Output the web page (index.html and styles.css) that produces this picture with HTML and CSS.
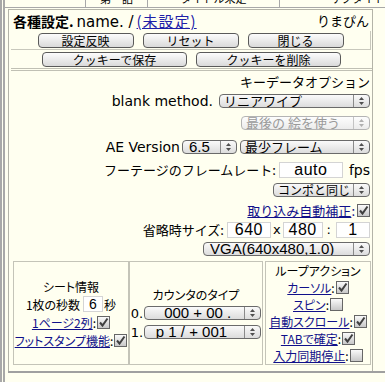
FILE: index.html
```html
<!DOCTYPE html>
<html lang="ja">
<head>
    <meta charset="UTF-8">
    <meta name="viewport" content="width=device-width, initial-scale=1.0">
    <title>各種設定</title>
    <link rel="stylesheet" href="styles.css">
</head>
<body>
<div class="page">
    <div class="tabs">
        <div class="tabs__cell tabs__cell--blank"></div>
        <div class="tabs__cell tabs__cell--no">第一話</div>
        <div class="tabs__cell tabs__cell--title">タイトル未定</div>
        <div class="tabs__cell tabs__cell--sub">サブタイトル</div>
    </div>

    <div class="main">
        <div class="panel">
            <div class="panel__title">
                <span><b class="title__head">各種設定.</b> <span class="title__name">name. /</span> <a href="#" class="link link--title">(未設定)</a></span>
                <span class="title__user">りまぴん</span>
            </div>

            <div class="btn-row btn-row--first">
                <button class="btn btn--small">設定反映</button>
                <button class="btn btn--small">リセット</button>
                <button class="btn btn--small">閉じる</button>
            </div>
            <div class="btn-row btn-row--second">
                <button class="btn btn--wide">クッキーで保存</button>
                <button class="btn btn--wide">クッキーを削除</button>
            </div>

            <div class="options">
                <div class="opt opt--20">キーデータオプション</div>
                <div class="opt opt--20">
                    <span class="latin">blank method.</span>
                    <span class="select select--method">
                        <span class="select__text">リニアワイプ</span>
                        <span class="select__arrow"><svg width="7" height="10" viewBox="0 0 7 10"><path d="M3.5 1L6 4H1Z M1 6H6L3.5 9Z" fill="#505050"/></svg></span>
                    </span>
                </div>
                <div class="opt opt--24">
                    <span class="select select--last select--disabled">
                        <span class="select__text">最後の 絵を使う</span>
                        <span class="select__arrow"><svg width="7" height="10" viewBox="0 0 7 10"><path d="M3.5 1L6 4H1Z M1 6H6L3.5 9Z" fill="#b0b0b0"/></svg></span>
                    </span>
                </div>
                <div class="opt opt--24">
                    <span class="latin">AE Version</span>
                    <span class="select select--ver">
                        <span class="select__text select__text--latin">6.5</span>
                        <span class="select__arrow"><svg width="7" height="10" viewBox="0 0 7 10"><path d="M3.5 1L6 4H1Z M1 6H6L3.5 9Z" fill="#505050"/></svg></span>
                    </span>
                    <span class="select select--frame">
                        <span class="select__text">最少フレーム</span>
                        <span class="select__arrow"><svg width="7" height="10" viewBox="0 0 7 10"><path d="M3.5 1L6 4H1Z M1 6H6L3.5 9Z" fill="#505050"/></svg></span>
                    </span>
                </div>
                <div class="opt opt--21">
                    フーテージのフレームレート:<input class="input input--fps" type="text" value="auto"><span class="latin unit">fps</span>
                </div>
                <div class="opt opt--20">
                    <span class="select select--comp">
                        <span class="select__text select__text--small">コンポと同じ</span>
                        <span class="select__arrow"><svg width="7" height="10" viewBox="0 0 7 10"><path d="M3.5 1L6 4H1Z M1 6H6L3.5 9Z" fill="#505050"/></svg></span>
                    </span>
                </div>
                <div class="opt opt--20">
                    <a href="#" class="link">取り込み自動補正</a><span class="colon">:</span>
                    <span class="check"><svg width="11" height="11" viewBox="0 0 11 11"><path d="M2 5.5L4.5 8.5L9.5 1.5" fill="none" stroke="#404040" stroke-width="2"/></svg></span>
                </div>
                <div class="opt opt--19">
                    省略時サイズ:<input class="input input--w" type="text" value="640"><span class="latin sep">x</span><input class="input input--h" type="text" value="480"><span class="latin sep sep--colon">:</span><input class="input input--ratio" type="text" value="1">
                </div>
                <div class="opt opt--19">
                    <span class="select select--size">
                        <span class="select__text select__text--latin">VGA(640x480,1.0)</span>
                        <span class="select__arrow"><svg width="7" height="10" viewBox="0 0 7 10"><path d="M3.5 1L6 4H1Z M1 6H6L3.5 9Z" fill="#505050"/></svg></span>
                    </span>
                </div>
            </div>

            <div class="bottom">
                <div class="cell cell--sheet">
                    <div class="line">シート情報</div>
                    <div class="line">1枚の秒数<input class="input input--sec" type="text" value="6">秒</div>
                    <div class="line">
                        <a href="#" class="link">1ページ2列</a>:<span class="check"><svg width="11" height="11" viewBox="0 0 11 11"><path d="M2 5.5L4.5 8.5L9.5 1.5" fill="none" stroke="#404040" stroke-width="2"/></svg></span>
                    </div>
                    <div class="line">
                        <a href="#" class="link">フットスタンプ機能</a>:<span class="check"><svg width="11" height="11" viewBox="0 0 11 11"><path d="M2 5.5L4.5 8.5L9.5 1.5" fill="none" stroke="#404040" stroke-width="2"/></svg></span>
                    </div>
                </div>

                <div class="cell cell--counter">
                    <div class="line">カウンタのタイプ</div>
                    <div class="line line--select">
                        <span class="latin num">0.</span>
                        <span class="select select--counter">
                            <span class="select__text select__text--latin">000 + 00 .</span>
                            <span class="select__arrow"><svg width="7" height="10" viewBox="0 0 7 10"><path d="M3.5 1L6 4H1Z M1 6H6L3.5 9Z" fill="#505050"/></svg></span>
                        </span>
                    </div>
                    <div class="line line--select">
                        <span class="latin num">1.</span>
                        <span class="select select--counter">
                            <span class="select__text select__text--latin">p 1 / + 001 _</span>
                            <span class="select__arrow"><svg width="7" height="10" viewBox="0 0 7 10"><path d="M3.5 1L6 4H1Z M1 6H6L3.5 9Z" fill="#505050"/></svg></span>
                        </span>
                    </div>
                </div>

                <div class="cell cell--loop">
                    <div class="line">ループアクション</div>
                    <div class="line">
                        <a href="#" class="link">カーソル</a>:<span class="check"><svg width="11" height="11" viewBox="0 0 11 11"><path d="M2 5.5L4.5 8.5L9.5 1.5" fill="none" stroke="#404040" stroke-width="2"/></svg></span>
                    </div>
                    <div class="line">
                        <a href="#" class="link">スピン</a>:<span class="check"></span>
                    </div>
                    <div class="line">
                        <a href="#" class="link">自動スクロール</a>:<span class="check"><svg width="11" height="11" viewBox="0 0 11 11"><path d="M2 5.5L4.5 8.5L9.5 1.5" fill="none" stroke="#404040" stroke-width="2"/></svg></span>
                    </div>
                    <div class="line">
                        <a href="#" class="link">TABで確定</a>:<span class="check"><svg width="11" height="11" viewBox="0 0 11 11"><path d="M2 5.5L4.5 8.5L9.5 1.5" fill="none" stroke="#404040" stroke-width="2"/></svg></span>
                    </div>
                    <div class="line">
                        <a href="#" class="link">入力同期停止</a>:<span class="check"></span>
                    </div>
                </div>
            </div>
        </div>
    </div>
</div>
</body>
</html>
```

FILE: styles.css
```css
* {
    box-sizing: border-box;
}

body {
    margin: 0;
    background-color: #fffff0;
    color: #000;
    font-family: "Noto Sans CJK JP", sans-serif;
    font-size: 13px;
    overflow: hidden;
}

.page {
    height: 382px;
    border-left: 5px double #a8a8a8;
}

.latin {
    font-family: "DejaVu Sans", "Noto Sans CJK JP", sans-serif;
    font-size: 14px;
}

.link {
    color: #10108a;
    text-decoration: underline;
}

/* tab strip cut off at the top */
.tabs {
    display: flex;
    height: 8px;
    overflow: hidden;
    border-bottom: 1px solid #a8a8a8;
    font-size: 11px;
}

.tabs__cell {
    height: 8px;
    border-right: 1px solid #a8a8a8;
    text-align: center;
    line-height: 14px;
}

.tabs__cell--blank { width: 81px; }
.tabs__cell--no { width: 62px; margin-top: -9px; height: 17px; }
.tabs__cell--title { width: 132px; margin-top: -9px; height: 17px; }
.tabs__cell--sub { flex: 1; margin-top: -9px; height: 17px; text-align: left; padding-left: 50px; border-right: none; }

.main {
    margin-left: 3px;
    margin-top: 1px;
    border-bottom: 2px solid #a0a0a0;
}

.panel {
    width: 365px;
    height: 362px;
    border: 1px solid #b4b4a8;
    border-bottom: none;
}

.panel__title {
    display: flex;
    justify-content: space-between;
    align-items: center;
    height: 21px;
    padding: 0 3px 0 4px;
}

.title__head {
    font-size: 14px;
}

.title__name {
    font-family: "DejaVu Sans", sans-serif;
    font-size: 15px;
}

.link--title {
    color: #2020a8;
    font-size: 15px;
    letter-spacing: 1px;
}

.btn-row {
    display: flex;
    justify-content: center;
    align-items: center;
    gap: 9px;
    margin: 0 1px 0 2px;
    border-right: 1px solid #c8c8bc;
}

.btn-row--first {
    height: 19px;
    border-bottom: 1px solid #c8c8bc;
}

.btn-row--second {
    height: 21px;
    border-bottom: 3px double #c0c0b4;
    margin-right: 0;
    border-right: none;
}

.btn {
    height: 15px;
    padding: 0;
    border: 1px solid #5a5a5a;
    border-radius: 4px;
    background: linear-gradient(#fcfcfc, #dadada);
    color: #000;
    font: 12px/13px "Noto Sans CJK JP", sans-serif;
}

.btn--small { width: 96px; }
.btn--wide { width: 145px; }

.options {
    padding-right: 2px;
}

.opt {
    display: flex;
    justify-content: flex-end;
    align-items: center;
    white-space: nowrap;
}

.opt--19 { height: 19px; }
.opt--20 { height: 20px; }
.opt--21 { height: 21px; }
.opt--24 { height: 24px; }

.select {
    display: inline-flex;
    height: 14px;
    margin-left: 3px;
    border: 1px solid #6a6a6a;
    border-radius: 4px;
    background: linear-gradient(#fafafa, #dcdcdc);
    line-height: 12px;
}

.select__text {
    flex: 1;
    padding-left: 4px;
    overflow: hidden;
    white-space: nowrap;
}

.select__text--latin {
    padding-left: 6px;
    font-family: "Liberation Sans", "Noto Sans CJK JP", sans-serif;
    font-size: 15px;
}

.select__text--small {
    font-size: 12px;
}

.select__arrow {
    display: flex;
    align-items: center;
    justify-content: center;
    width: 16px;
    border-left: 1px solid #8a8a8a;
}

.select--disabled {
    border-color: #b4b4b4;
    color: #9a9a9a;
    background: linear-gradient(#fdfdfd, #ececec);
}

.select--disabled .select__arrow {
    border-left-color: #c4c4c4;
}

.select--method { width: 151px; margin-left: 6px; }
.select--last { width: 129px; }
.select--ver { width: 55px; margin-left: 2px; }
.select--frame { width: 130px; }
.select--comp { width: 97px; }
.select--size { width: 167px; }
.select--counter { width: 117px; margin-left: 1px; }

.input {
    height: 16px;
    margin: 0 0 0 3px;
    padding: 0;
    border: 1px solid #d4d4d4;
    background-color: #fff;
    text-align: center;
    font-family: "Liberation Sans", sans-serif;
    font-size: 16px;
    line-height: 14px;
    letter-spacing: 0.5px;
    color: #000;
}

.input--fps { width: 64px; }
.input--w { width: 44px; }
.input--h { width: 40px; }
.input--ratio { width: 34px; }
.input--sec { width: 20px; margin: 0 1px 0 3px; font-size: 14px; }

.unit { margin-left: 6px; }

.sep { margin-left: 2px; font-size: 13px; }
.sep--colon { margin-left: 4px; margin-right: 3px; }
.sep + .input { margin-left: 2px; }

.colon {
    color: #10108a;
    margin-right: 1px;
}

.check {
    display: inline-flex;
    align-items: center;
    justify-content: center;
    width: 13px;
    height: 13px;
    margin-left: 1px;
    border: 1px solid #666;
    background: linear-gradient(#fafafa, #c8c8c8);
    vertical-align: middle;
}

.bottom {
    display: flex;
    height: 104px;
    margin: 3px 0 0 4px;
    font-size: 12px;
    font-feature-settings: "palt";
}

.cell {
    display: flex;
    flex-direction: column;
    justify-content: center;
    align-items: center;
    border: 1px solid #c4c4b8;
    text-align: center;
}

.cell--sheet { width: 116px; }
.cell--counter { width: 134px; margin-right: 2px; }
.cell--loop { width: 106px; }

.cell--sheet .line {
    display: flex;
    align-items: center;
    height: 18px;
}

.cell--counter .line {
    display: flex;
    align-items: center;
    height: 19px;
}

.cell--loop .line {
    display: flex;
    align-items: center;
    height: 17px;
}

.num {
    font-size: 13px;
}
```
